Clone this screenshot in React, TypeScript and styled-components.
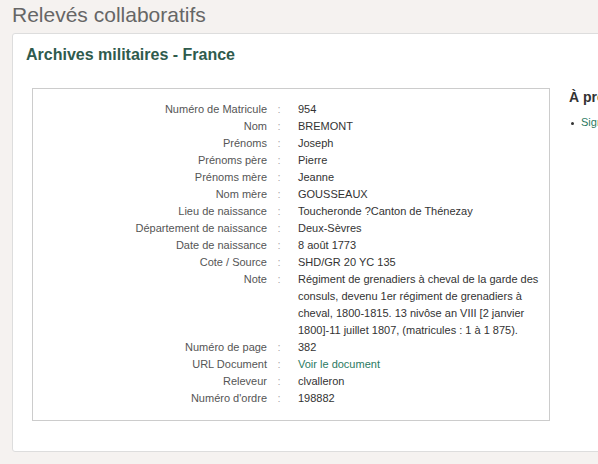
import React from 'react'
import styled, { createGlobalStyle } from 'styled-components'

const GlobalStyle = createGlobalStyle`
  html, body {
    margin: 0;
    padding: 0;
    background: #f5f2f0;
    font-family: 'Liberation Sans', Arial, sans-serif;
    overflow: hidden;
  }
`

const Page = styled.div`
  width: 598px;
  height: 464px;
  overflow: hidden;
`

const PageTitle = styled.h1`
  margin: 0;
  padding: 1px 0 0 12px;
  height: 32px;
  font-size: 21px;
  line-height: 28px;
  font-weight: normal;
  color: #666;
`

const Panel = styled.section`
  margin-left: 12px;
  width: 700px;
  height: 419px;
  box-sizing: border-box;
  background: #fff;
  border: 1px solid #ddd;
  border-radius: 3px;
  padding: 11px 13px;
`

const PanelTitle = styled.h2`
  margin: 0 0 23px;
  font-size: 16px;
  line-height: 20px;
  font-weight: bold;
  color: #2f5b4d;
`

const Body = styled.div`
  display: flex;
  align-items: flex-start;
  gap: 19px;
  padding-left: 6px;
`

const Record = styled.div`
  flex-shrink: 0;
  width: 518px;
  box-sizing: border-box;
  border: 1px solid #ccc;
  padding: 12px 2px 13px 0;
  display: grid;
  grid-template-columns: 234px 24px 1fr;
  font-size: 11px;
  line-height: 17px;
`

const Label = styled.div`
  text-align: right;
  color: #555;
`

const Colon = styled.div`
  text-align: center;
  color: #aaa;
`

const Value = styled.div<{ $link?: boolean }>`
  padding-left: 7px;
  color: ${({ $link }) => ($link ? '#2b7a62' : '#333')};
`

const Side = styled.aside`
  flex-shrink: 0;
  width: 150px;
  padding-top: 1px;
`

const SideTitle = styled.h3`
  margin: 0 0 9px;
  font-size: 14px;
  line-height: 16px;
  font-weight: bold;
  color: #333;
`

const SideList = styled.ul`
  margin: 0;
  padding-left: 12px;
  font-size: 11px;
  line-height: 17px;
  list-style: none;

  li {
    color: #2b7a62;
    white-space: nowrap;
    position: relative;
  }
  li::before {
    content: '';
    position: absolute;
    left: -10px;
    top: 8px;
    width: 3px;
    height: 3px;
    border-radius: 50%;
    background: #333;
  }
`

const rows: { label: string; value: string; link?: boolean }[] = [
  { label: 'Numéro de Matricule', value: '954' },
  { label: 'Nom', value: 'BREMONT' },
  { label: 'Prénoms', value: 'Joseph' },
  { label: 'Prénoms père', value: 'Pierre' },
  { label: 'Prénoms mère', value: 'Jeanne' },
  { label: 'Nom mère', value: 'GOUSSEAUX' },
  { label: 'Lieu de naissance', value: 'Toucheronde ?Canton de Thénezay' },
  { label: 'Département de naissance', value: 'Deux-Sèvres' },
  { label: 'Date de naissance', value: '8 août 1773' },
  { label: 'Cote / Source', value: 'SHD/GR 20 YC 135' },
  {
    label: 'Note',
    value:
      'Régiment de grenadiers à cheval de la garde des consuls, devenu 1er régiment de grenadiers à cheval, 1800-1815. 13 nivôse an VIII [2 janvier 1800]-11 juillet 1807, (matricules : 1 à 1 875).'
  },
  { label: 'Numéro de page', value: '382' },
  { label: 'URL Document', value: 'Voir le document', link: true },
  { label: 'Releveur', value: 'clvalleron' },
  { label: "Numéro d'ordre", value: '198882' }
]

export default function App() {
  return (
    <Page>
      <GlobalStyle />
      <PageTitle>Relevés collaboratifs</PageTitle>
      <Panel>
        <PanelTitle>Archives militaires - France</PanelTitle>
        <Body>
          <Record>
            {rows.map((r) => (
              <React.Fragment key={r.label}>
                <Label>{r.label}</Label>
                <Colon>:</Colon>
                <Value $link={r.link}>{r.value}</Value>
              </React.Fragment>
            ))}
          </Record>
          <Side>
            <SideTitle>À propos</SideTitle>
            <SideList>
              <li>Signaler une erreur</li>
            </SideList>
          </Side>
        </Body>
      </Panel>
    </Page>
  )
}
